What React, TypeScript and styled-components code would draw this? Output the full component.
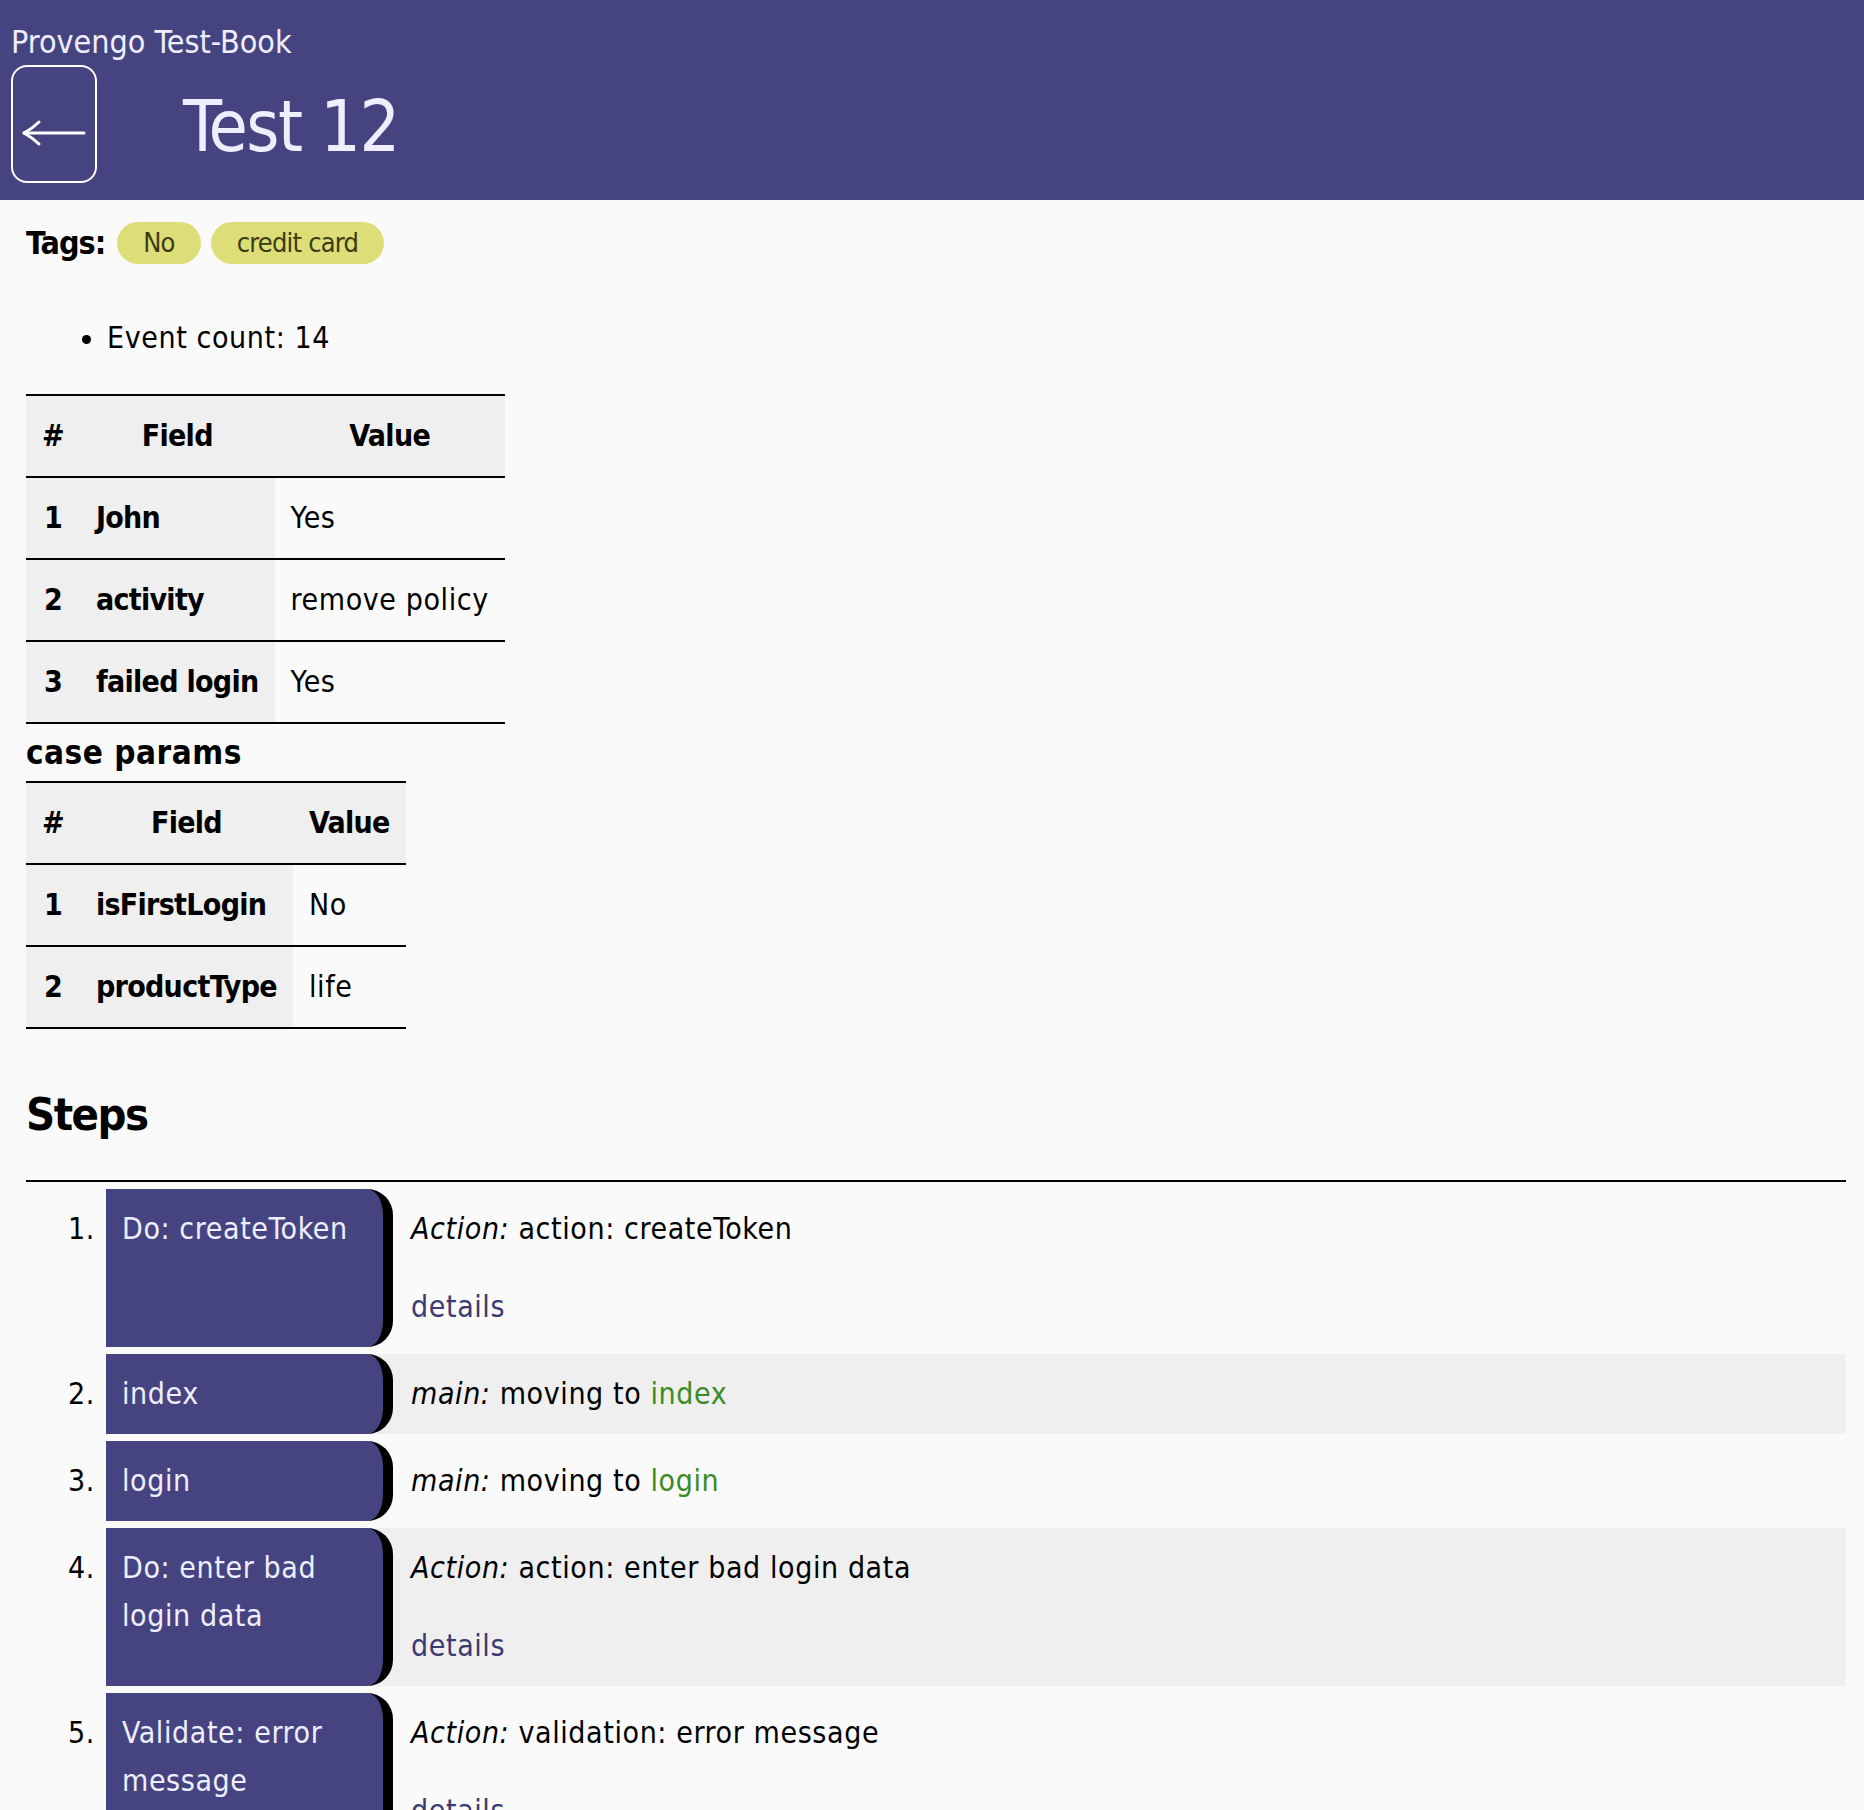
import React from "react";
import styled, { createGlobalStyle } from "styled-components";

const GlobalStyle = createGlobalStyle`
  body {
    margin: 0;
    background: #fafafa;
    color: #000;
    font-family: "DejaVu Sans Condensed", "DejaVu Sans", sans-serif;
    font-size: 30px;
    line-height: 48px;
    letter-spacing: 0.6px;
  }
`;

const Header = styled.header`
  background: #464480;
  color: #eeeeff;
  padding: 22px 10px 17px 11px;
`;

const BookTitle = styled.div`
  font-size: 32px;
  line-height: 40px;
  letter-spacing: 0;
`;

const TitleRow = styled.div`
  display: flex;
  align-items: flex-start;
  gap: 86px;
  margin-top: 3px;
`;

const BackButton = styled.button`
  width: 86px;
  height: 118px;
  box-sizing: border-box;
  border: 2px solid #ffffff;
  border-radius: 16px;
  background: transparent;
  padding: 0;
  cursor: pointer;
  svg {
    display: block;
  }
`;

const PageTitle = styled.h1`
  margin: 0;
  padding-top: 6px;
  font-size: 71px;
  font-weight: normal;
  line-height: 112px;
  letter-spacing: -1.5px;
`;

const Main = styled.main`
  padding: 0 18px 0 26px;
`;

const TagsRow = styled.div`
  display: flex;
  align-items: center;
  gap: 10px;
  height: 42px;
  margin-top: 22px;
`;

const TagsLabel = styled.span`
  font-size: 32px;
  font-weight: bold;
  letter-spacing: -1px;
  margin-right: 2px;
`;

const Tag = styled.span`
  background: #dede78;
  color: #3b3b12;
  border-radius: 21px;
  padding: 0 26px;
  font-size: 27px;
  line-height: 42px;
  letter-spacing: -0.8px;
`;

const InfoList = styled.ul`
  margin: 50px 0 32px;
  padding-left: 81px;
`;

const Table = styled.table`
  border-collapse: collapse;
`;

const Caption = styled.caption`
  caption-side: top;
  text-align: left;
  font-size: 33px;
  font-weight: bold;
  line-height: 57px;
  letter-spacing: 0.5px;
`;

const HeadCell = styled.th`
  background: #efefef;
  border-top: 2px solid #000;
  border-bottom: 2px solid #000;
  padding: 16px;
  text-align: center;
  font-weight: bold;
  letter-spacing: -0.7px;
`;

const RowHead = styled.th<{ $center?: boolean }>`
  background: #efefef;
  border-top: 2px solid #000;
  border-bottom: 2px solid #000;
  padding: 16px;
  text-align: ${(p) => (p.$center ? "center" : "left")};
  font-weight: bold;
  letter-spacing: -0.7px;
  white-space: nowrap;
`;

const Cell = styled.td`
  border-top: 2px solid #000;
  border-bottom: 2px solid #000;
  padding: 16px;
  white-space: nowrap;
`;

const StepsTitle = styled.h2`
  margin: 59px 0 0;
  font-size: 45px;
  line-height: 54px;
  font-weight: bold;
  letter-spacing: -1.5px;
`;

const Rule = styled.hr`
  border: none;
  height: 2px;
  background: #000;
  margin: 38px 0 7px;
`;

const StepList = styled.ol`
  list-style: none;
  margin: 0;
  padding: 0;
`;

const StepItem = styled.li`
  display: flex;
  margin-bottom: 7px;
`;

const StepNum = styled.span`
  flex: 0 0 80px;
  box-sizing: border-box;
  padding: 16px 11px 0 0;
  text-align: right;
`;

const StepBody = styled.div<{ $striped: boolean }>`
  flex: 1;
  display: flex;
  background: ${(p) => (p.$striped ? "#efefef" : "transparent")};
`;

const StepBox = styled.div`
  flex: 0 0 287px;
  box-sizing: border-box;
  padding: 16px;
  background: #464480;
  color: #eeeeff;
  border-right: 10px solid #000;
  border-radius: 0 26px 26px 0;
`;

const StepInfo = styled.div`
  padding: 16px 16px 16px 18px;
`;

const Details = styled.a`
  display: block;
  margin-top: 30px;
  color: #3b3a72;
  text-decoration: none;
  cursor: pointer;
`;

const Target = styled.span`
  color: #3b8c26;
`;

type Step = {
  title: string;
  kind: string;
  text: string;
  target?: string;
  details?: boolean;
};

const steps: Step[] = [
  { title: "Do: createToken", kind: "Action:", text: "action: createToken", details: true },
  { title: "index", kind: "main:", text: "moving to ", target: "index" },
  { title: "login", kind: "main:", text: "moving to ", target: "login" },
  { title: "Do: enter bad login data", kind: "Action:", text: "action: enter bad login data", details: true },
  { title: "Validate: error message", kind: "Action:", text: "validation: error message", details: true },
];

const testParams = [
  ["John", "Yes"],
  ["activity", "remove policy"],
  ["failed login", "Yes"],
];

const caseParams = [
  ["isFirstLogin", "No"],
  ["productType", "life"],
];

function ParamTable({ rows, caption }: { rows: string[][]; caption?: string }) {
  return (
    <Table>
      {caption && <Caption>{caption}</Caption>}
      <thead>
        <tr>
          <HeadCell>#</HeadCell>
          <HeadCell>Field</HeadCell>
          <HeadCell>Value</HeadCell>
        </tr>
      </thead>
      <tbody>
        {rows.map(([field, value], i) => (
          <tr key={field}>
            <RowHead $center>{i + 1}</RowHead>
            <RowHead>{field}</RowHead>
            <Cell>{value}</Cell>
          </tr>
        ))}
      </tbody>
    </Table>
  );
}

function BackArrow() {
  return (
    <svg width="82" height="114" viewBox="0 0 82 114">
      <g stroke="#ffffff" strokeWidth="3" fill="none" strokeLinecap="round">
        <path d="M13 66 H71" />
        <path d="M11 66 Q20 61 26 55" />
        <path d="M11 66 Q20 71 26 77" />
      </g>
    </svg>
  );
}

export default function App() {
  return (
    <>
      <GlobalStyle />
      <Header>
        <BookTitle>Provengo Test-Book</BookTitle>
        <TitleRow>
          <BackButton aria-label="back">
            <BackArrow />
          </BackButton>
          <PageTitle>Test 12</PageTitle>
        </TitleRow>
      </Header>
      <Main>
        <TagsRow>
          <TagsLabel>Tags:</TagsLabel>
          <Tag>No</Tag>
          <Tag>credit card</Tag>
        </TagsRow>
        <InfoList>
          <li>Event count: 14</li>
        </InfoList>
        <ParamTable rows={testParams} />
        <ParamTable rows={caseParams} caption="case params" />
        <StepsTitle>Steps</StepsTitle>
        <Rule />
        <StepList>
          {steps.map((s, i) => (
            <StepItem key={i}>
              <StepNum>{i + 1}.</StepNum>
              <StepBody $striped={i % 2 === 1}>
                <StepBox>{s.title}</StepBox>
                <StepInfo>
                  <div>
                    <i>{s.kind}</i> {s.text}
                    {s.target && <Target>{s.target}</Target>}
                  </div>
                  {s.details && <Details>details</Details>}
                </StepInfo>
              </StepBody>
            </StepItem>
          ))}
        </StepList>
      </Main>
    </>
  );
}
